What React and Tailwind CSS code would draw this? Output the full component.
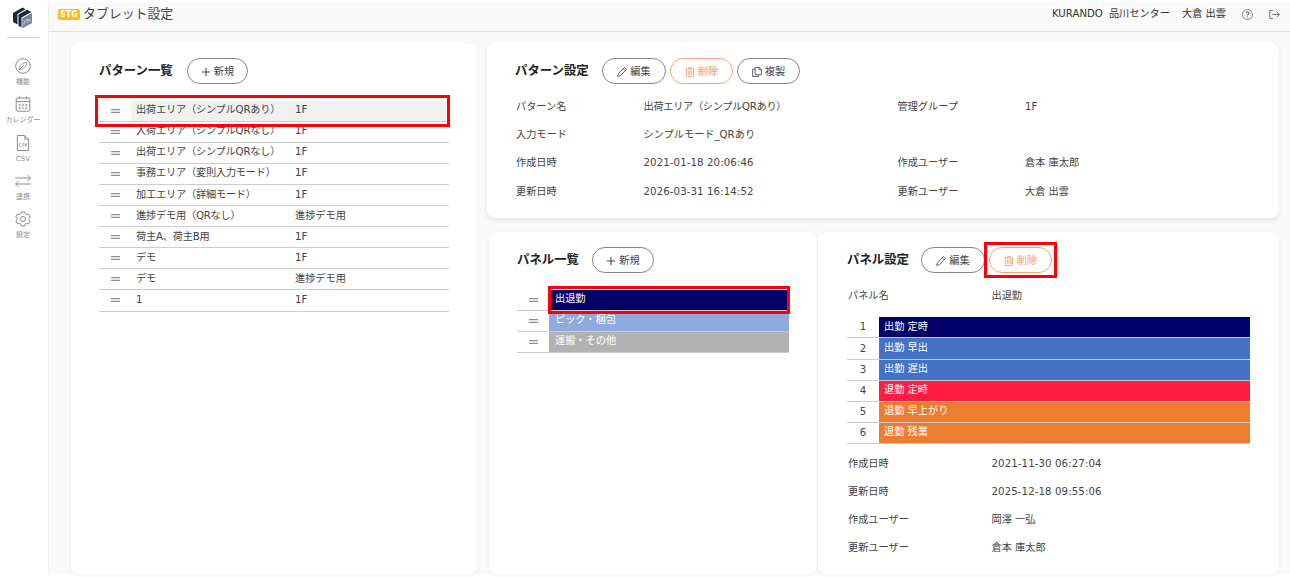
import React from "react"

const NAV_ITEMS = [
  { label: "機能", icon: "compass" },
  { label: "カレンダー", icon: "calendar" },
  { label: "CSV", icon: "csv" },
  { label: "連携", icon: "swap" },
  { label: "設定", icon: "gear" },
]

const PATTERNS = [
  { name: "出荷エリア（シンプルQRあり）", group: "1F", selected: true },
  { name: "入荷エリア（シンプルQRなし）", group: "1F" },
  { name: "出荷エリア（シンプルQRなし）", group: "1F" },
  { name: "事務エリア（変則入力モード）", group: "1F" },
  { name: "加工エリア（詳細モード）", group: "1F" },
  { name: "進捗デモ用（QRなし）", group: "進捗デモ用" },
  { name: "荷主A、荷主B用", group: "1F" },
  { name: "デモ", group: "1F" },
  { name: "デモ", group: "進捗デモ用" },
  { name: "1", group: "1F" },
]

const PATTERN_DETAIL = [
  ["パターン名", "出荷エリア（シンプルQRあり）", "管理グループ", "1F"],
  ["入力モード", "シンプルモード_QRあり", "", ""],
  ["作成日時", "2021-01-18 20:06:46", "作成ユーザー", "倉本 庫太郎"],
  ["更新日時", "2026-03-31 16:14:52", "更新ユーザー", "大倉 出雲"],
]

const PANELS = [
  { name: "出退勤", color: "bg-[#000066]", selected: true },
  { name: "ピック・梱包", color: "bg-[#8faadc]" },
  { name: "運搬・その他", color: "bg-[#b2b2b2]" },
]

const PANEL_BUTTONS = [
  { name: "出勤 定時", color: "bg-[#000066]" },
  { name: "出勤 早出", color: "bg-[#4472c4]" },
  { name: "出勤 遅出", color: "bg-[#4472c4]" },
  { name: "退勤 定時", color: "bg-[#ff1d44]" },
  { name: "退勤 早上がり", color: "bg-[#ed7d31]" },
  { name: "退勤 残業", color: "bg-[#ed7d31]" },
]

const PANEL_DETAIL = [
  ["作成日時", "2021-11-30 06:27:04"],
  ["更新日時", "2025-12-18 09:55:06"],
  ["作成ユーザー", "岡澤 一弘"],
  ["更新ユーザー", "倉本 庫太郎"],
]

const ICONS = {
  compass: (
    <>
      <circle cx="8" cy="8" r="7.3" />
      <path d="M11.8 4.200C12.200 7.500 8.500 11.500 4.300 11.700C3.800 8.500 7.800 4.200 11.800 4.200ZM4.300 11.700 9 7" strokeWidth=".900" strokeLinejoin="round" />
    </>
  ),
  calendar: (
    <>
      <rect x="1.2" y="2" width="13.6" height="13.2" rx="1" />
      <path d="M1.2 5.6h13.6M4.4 .4v3M11.6 .4v3" />
      <path d="M4 9h1.6M7.2 9h1.6M10.4 9H12M4 12h1.6M7.2 12h1.6M10.4 12H12" strokeWidth="1.5" />
    </>
  ),
  csv: (
    <>
      <path d="M2.4.5h7.4l3.8 3.8v11.2H2.4ZM9.8.5v3.8h3.8" strokeLinejoin="round" />
      <path d="M6.2 8.4C4.6 7.6 4.2 8.6 4.2 9.8s.6 2 2 1.2M8.9 8.3c-1.4-.3-1.8 1-.8 1.4 1.2.4.8 1.9-.9 1.5M9.8 8.2l1 3 1.1-3" strokeWidth=".8" />
    </>
  ),
  swap: <path d="M.6 5h14.8M12.6 2.2l2.8 2.8-2.8 2.800M15.400 11H.6M3.400 13.800.6 11l2.800-2.800" strokeLinecap="round" />,
  gear: (
    <>
      <circle cx="8" cy="8" r="2.5" />
      <path
        d="M6.3.9h3.4l.6 2 1.2.7 2-.5 1.8 2.900-1.500 1.400v1.200l1.500 1.400-1.800 2.900-2-.5-1.200.7-.6 2H6.300l-.6-2-1.200-.7-2 .5L.7 10l1.500-1.400V7.400L.7 6l1.800-2.900 2 .5 1.200-.7Z"
        strokeLinejoin="round"
      />
    </>
  ),
  plus: <path d="M8 1.5v13M1.5 8h13" strokeWidth="1.7" />,
  pencil: (
    <path d="M1 15 2.2 10.6 11.3 1.4q.9-.8 1.8 0L14.6 3q.8.9 0 1.7L5.4 13.8ZM10 2.8 13.2 6" strokeWidth="1.3" strokeLinejoin="round" />
  ),
  trash: (
    <path d="M.8 3h14.4M5.6 3V1h4.8v2M2.3 3v12.2h11.4V3M5.3 5.6v7M8 5.6v7M10.7 5.6v7" strokeWidth="1.3" strokeLinejoin="round" />
  ),
  copy: (
    <path d="M5 .8h6.6L15 4.2v8.2H5ZM11.4 1v3.4H15M5 3.4H1v11.8h9.6v-2.8" strokeWidth="1.3" strokeLinejoin="round" />
  ),
  help: (
    <>
      <circle cx="8" cy="8" r="7.2" strokeWidth="1.2" />
      <path d="M5.8 6.2c0-3 4.5-2.8 4.5-.2C10.3 7.7 8 7.6 8 9.600M8 11v1.400" strokeWidth="1.5" />
    </>
  ),
  logout: <path d="M6 2H1.200v12H6M5 8h10M11.200 4l4 4-4 4" strokeWidth="1.3" />,
}

function Icon({ name, className }) {
  return (
    <svg viewBox="0 0 16 16" fill="none" stroke="currentColor" className={className}>
      {ICONS[name]}
    </svg>
  )
}

function Logo() {
  return (
    <svg viewBox="0 0 20 22" className="h-[22px] w-5">
      <path d="M0 6 9.5.5l3 1.700L4.500 7v10.500L0 15Z" fill="#1e2a3b" />
      <path d="M5.500 7.600 14 2.800l4.500 2.200-10 5.500v10l-3-1.800Z" fill="#1e2a3b" />
      <path d="M9.300 11.200 19 6v10l-9.700 5.500Z" fill="#76879d" />
      <path d="M11 17.500c.2-5 5.500-7 6.500-3M13.800 16l1.700-3" stroke="#dfe5ec" fill="none" strokeWidth=".8" />
    </svg>
  )
}

function PillButton({ icon, label, danger, width = "w-[63px]" }) {
  return (
    <button
      className={`${width} ${
        danger ? "border-[#f4a27c] text-[#f0986e]" : "border-[#85858a] text-[#444]"
      } flex h-[26px] shrink-0 items-center justify-center gap-[3px] rounded-full border bg-white pt-px`}
    >
      <Icon name={icon} className="size-[10px]" />
      {label}
    </button>
  )
}

function Handle() {
  return (
    <div className="flex w-8 shrink-0 items-center justify-center border-b border-[#ccc]">
      <div className="h-1 w-[9px] border-y border-[#8d8d95] bg-[#e4e4e8]" />
    </div>
  )
}

function Title({ children, className }) {
  return <h2 className={`text-[12.4px] leading-4 font-bold text-[#222] ${className}`}>{children}</h2>
}

function Highlight({ className }) {
  return <div className={`pointer-events-none absolute z-10 border-3 border-[#fb0007] ${className}`} />
}

export default function App() {
  return (
    <div
      lang="ja"
      className="flex h-[577px] w-[1290px] overflow-hidden bg-white text-[10.2px] leading-4 text-[#444] [font-family:'DejaVu_Sans','Noto_Sans_CJK_JP',sans-serif]"
    >
      {/* SIDEBAR */}
      <aside className="flex w-12 shrink-0 flex-col items-center pt-[7px] pr-[2px]">
        <Logo />
        <div className="mt-2 mb-5 h-px w-8 bg-[#ccc]" />
        {NAV_ITEMS.map((item) => (
          <div key={item.label} className="flex h-[38.3px] flex-col items-center text-[#8c8c8c]">
            <Icon name={item.icon} className="size-4 shrink-0" />
            <span className="mt-[3px] text-[7px] leading-[10px] whitespace-nowrap">{item.label}</span>
          </div>
        ))}
      </aside>

      <div className="mt-[2px] mb-[3px] flex flex-1 flex-col border-l border-[#f0f0f0] bg-[#fafafa]">
        {/* HEADER */}
        <header className="flex h-[30px] shrink-0 items-center border-b border-[#dedede] pb-[5px] pl-[9px] pr-[10px]">
          <span className="mt-px flex h-[11px] w-[22px] items-center justify-center rounded-[2px] bg-[#fbbc14] text-[8px] leading-none font-bold text-white">
            STG
          </span>
          <h1 className="ml-[3px] text-[12.9px]">タブレット設定</h1>
          <div className="ml-auto flex items-center text-[#333]">
            <span>KURANDO</span>
            <span className="ml-[6px]">品川センター</span>
            <span className="ml-3">大倉 出雲</span>
            <Icon name="help" className="ml-4 size-[11px] text-[#666]" />
            <Icon name="logout" className="ml-4 size-[11px] text-[#666]" />
          </div>
        </header>

        <main className="flex flex-1 pt-[11px] pl-[22px]">
          {/* PATTERN LIST */}
          <section className="relative w-[406px] rounded-lg bg-white pt-[15px] pl-7 shadow-[0_1px_4px_rgba(0,0,0,0.06)]">
            <div className="flex items-center">
              <Title className="w-[88px]">パターン一覧</Title>
              <PillButton icon="plus" label="新規" width="w-[61px]" />
            </div>
            <div className="mt-[16.6px] w-[350px]">
              {PATTERNS.map((row, i) => (
                <div key={i} className="flex h-[21.1px]">
                  <Handle />
                  <div
                    className={`${
                      row.selected ? "bg-[#f1f1f1]" : ""
                    } flex flex-1 items-center border-b border-[#ccc] pb-px pl-[5px]`}
                  >
                    <span className="w-[159px] tracking-[-0.2px] whitespace-nowrap">{row.name}</span>
                    <span>{row.group}</span>
                  </div>
                </div>
              ))}
            </div>
            <Highlight className="top-[52px] left-6 h-8 w-[355px]" />
          </section>

          <div className="ml-[10px] w-[792px]">
            {/* PATTERN DETAIL */}
            <section className="h-[175px] rounded-lg bg-white pt-[15px] pl-7 shadow-[0_2px_5px_rgba(0,0,0,0.1)]">
              <div className="flex items-center gap-1">
                <Title className="w-[83px]">パターン設定</Title>
                <PillButton icon="pencil" label="編集" width="w-16" />
                <PillButton icon="trash" label="削除" danger />
                <PillButton icon="copy" label="複製" />
              </div>
              <div className="mt-[9px] ml-px">
                {PATTERN_DETAIL.map((row) => (
                  <div key={row[0]} className="grid h-[28.2px] grid-cols-[127.5px_254px_127.5px_1fr] items-center">
                    {row.map((text, i) => (
                      <span key={i} className={/^\d{4}/.test(text) ? "tracking-[0.1px]" : text.includes("（") ? "tracking-[-0.3px]" : ""}>
                        {text}
                      </span>
                    ))}
                  </div>
                ))}
              </div>
            </section>

            <div className="mt-[14px] ml-[2px] flex h-[342px] gap-px">
              {/* PANEL LIST */}
              <section className="relative w-[328px] rounded-lg bg-white pt-[15px] pl-7 shadow-[0_1px_4px_rgba(0,0,0,0.06)]">
                <div className="flex items-center">
                  <Title className="w-[75px]">パネル一覧</Title>
                  <PillButton icon="plus" label="新規" width="w-[62px]" />
                </div>
                <div className="mt-[16.6px] w-[272px]">
                  {PANELS.map((panel) => (
                    <div key={panel.name} className="flex h-[21.1px]">
                      <Handle />
                      <div className={`${panel.color} flex flex-1 items-center border-b border-[#ccc] pb-[2px] pl-[6px] text-white`}>
                        {panel.name}
                      </div>
                    </div>
                  ))}
                </div>
                <Highlight className="top-[54px] left-[59px] h-7 w-[242px]" />
              </section>

              {/* PANEL DETAIL */}
              <section className="relative flex-1 rounded-lg bg-white pt-[15px] pl-[29px] shadow-[0_1px_4px_rgba(0,0,0,0.06)]">
                <div className="flex items-center gap-1">
                  <Title className="w-[70px]">パネル設定</Title>
                  <PillButton icon="pencil" label="編集" width="w-16" />
                  <PillButton icon="trash" label="削除" danger />
                </div>
                <div className="mt-[9px] ml-px grid h-7 grid-cols-[143.5px_1fr] items-center">
                  <span>パネル名</span>
                  <span>出退勤</span>
                </div>
                <div className="mt-[7.4px] w-[403px]">
                  {PANEL_BUTTONS.map((button, i) => (
                    <div key={button.name} className="flex h-[21.1px]">
                      <div className="flex w-8 items-center justify-center border-b border-[#ccc]">{i + 1}</div>
                      <div className={`${button.color} flex flex-1 items-center border-b border-[#ccc] pb-px pl-[5px] text-white`}>
                        {button.name}
                      </div>
                    </div>
                  ))}
                </div>
                <div className="mt-[5.6px] ml-px">
                  {PANEL_DETAIL.map(([label, value]) => (
                    <div key={label} className="grid h-7 grid-cols-[143.5px_1fr] items-center">
                      <span>{label}</span>
                      <span className={/^\d{4}/.test(value) ? "tracking-[0.1px]" : ""}>{value}</span>
                    </div>
                  ))}
                </div>
                <Highlight className="top-[10px] left-[166px] h-9 w-[73px]" />
              </section>
            </div>
          </div>
        </main>
      </div>
    </div>
  )
}
